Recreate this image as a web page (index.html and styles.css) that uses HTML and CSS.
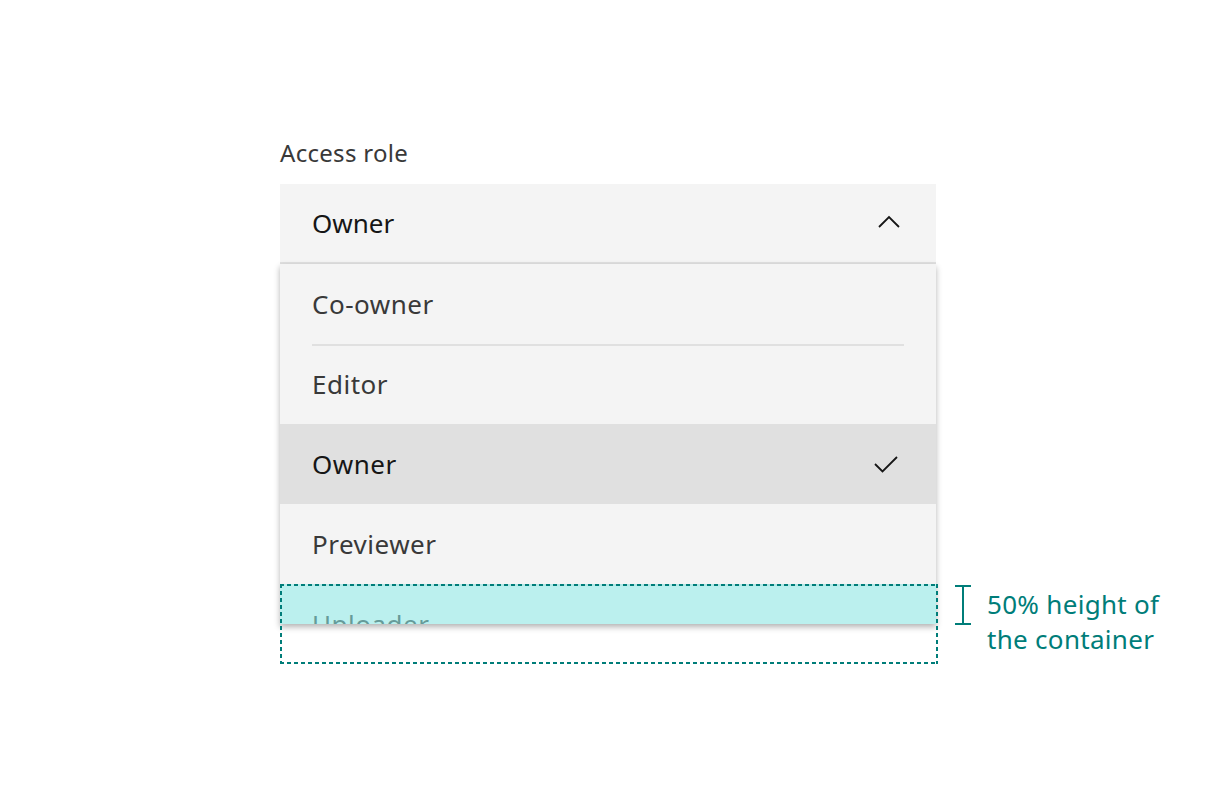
FILE: index.html
```html
<!DOCTYPE html>
<html lang="en">
<head>
<meta charset="utf-8">
<title>Access role dropdown</title>
<link rel="stylesheet" href="styles.css">
</head>
<body>
<div class="stage">
  <div class="dropdown">
    <div class="label">Access role</div>
    <div class="field">
      <span class="field-value">Owner</span>
      <svg class="chevron" width="22" height="13" viewBox="0 0 22 13" aria-hidden="true">
        <path d="M1 12 L11 2 L21 12" fill="none" stroke="#161616" stroke-width="1.8"/>
      </svg>
    </div>
    <div class="menu-wrap">
      <ul class="menu">
        <li class="item"><span class="item-text">Co-owner</span></li>
        <li class="item divided"><span class="item-text">Editor</span></li>
        <li class="item selected"><span class="item-text">Owner</span>
          <svg class="check" width="24" height="17" viewBox="0 0 24 17" aria-hidden="true">
            <path d="M1 8 L8.5 15.5 L23 1" fill="none" stroke="#161616" stroke-width="1.8"/>
          </svg>
        </li>
        <li class="item"><span class="item-text">Previewer</span></li>
        <li class="item divided"><span class="item-text">Uploader</span></li>
      </ul>
      <div class="highlight"></div>
      <div class="dashed-box"></div>
      <div class="annotation">
        <svg class="ibeam" width="18" height="40" viewBox="0 0 18 40" aria-hidden="true">
          <path d="M1 1 H17 M9 1 V39 M1 39 H17" fill="none" stroke="#007d79" stroke-width="2"/>
        </svg>
        <div class="annotation-text">50% height of<br>the container</div>
      </div>
    </div>
  </div>
</div>
</body>
</html>
```
FILE: styles.css
```css
* { box-sizing: border-box; }
html, body { margin: 0; padding: 0; background: #ffffff; }
body {
  font-family: "Noto Sans", "Open Sans", sans-serif;
  width: 1216px;
  height: 810px;
  overflow: hidden;
}
.stage {
  padding: 137px 0 0 280px;
}
.dropdown {
  width: 656px;
  display: flex;
  flex-direction: column;
}
.label {
  font-size: 24px;
  line-height: 32px;
  color: #393939;
  margin-bottom: 15px;
  letter-spacing: 0.3px;
}
.field {
  height: 80px;
  background: #f4f4f4;
  border-bottom: 2px solid #e0e0e0;
  display: flex;
  align-items: center;
  justify-content: space-between;
  padding: 0 36px 0 32px;
}
.field-value {
  font-size: 26px;
  color: #161616;
}
.chevron { display: block; margin-top: -4px; }
.menu-wrap {
  position: relative;
}
.menu {
  list-style: none;
  margin: 0;
  padding: 0;
  height: 360px;
  overflow: hidden;
  background: #f4f4f4;
  box-shadow: 0 3px 6px rgba(0, 0, 0, 0.3);
}
.item {
  height: 80px;
  display: flex;
  align-items: center;
  justify-content: space-between;
  padding: 0 38px 0 32px;
  font-size: 26px;
  letter-spacing: 0.5px;
  color: #393939;
  position: relative;
}
.item.divided::before {
  content: "";
  position: absolute;
  left: 32px;
  right: 32px;
  top: 0;
  height: 2px;
  background: #e0e0e0;
}
.item.selected {
  background: #e0e0e0;
  color: #161616;
}
.item-text { line-height: 1; }
.check { display: block; }
.highlight {
  position: absolute;
  left: 0;
  top: 320px;
  width: 656px;
  height: 40px;
  background: rgba(140, 236, 234, 0.55);
}
.dashed-box {
  position: absolute;
  left: 0;
  top: 320px;
  width: 658px;
  height: 80px;
  background:
    repeating-linear-gradient(90deg, #007d79 0 4px, transparent 4px 7px) top left / 100% 2px no-repeat,
    repeating-linear-gradient(90deg, #007d79 0 4px, transparent 4px 7px) bottom left / 100% 2px no-repeat,
    repeating-linear-gradient(180deg, #007d79 0 4px, transparent 4px 7px) top left / 2px 100% no-repeat,
    repeating-linear-gradient(180deg, #007d79 0 4px, transparent 4px 7px) top right / 2px 100% no-repeat;
}
.annotation {
  position: absolute;
  left: 674px;
  top: 321px;
  display: flex;
  gap: 15px;
  align-items: flex-start;
  white-space: nowrap;
}
.ibeam { display: block; flex-shrink: 0; }
.annotation-text {
  font-size: 26px;
  line-height: 35px;
  letter-spacing: 0.3px;
  color: #007d79;
  margin-top: 2px;
}
```
